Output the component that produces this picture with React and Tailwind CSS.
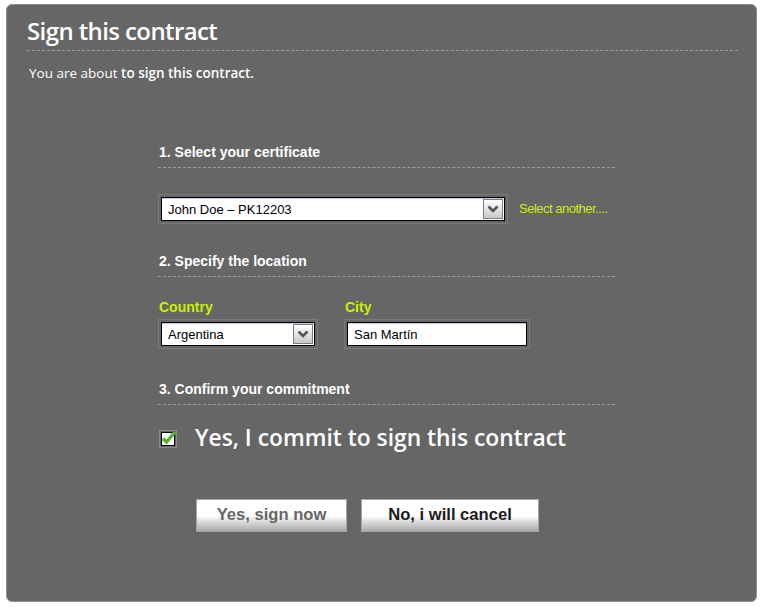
import React from 'react';

const arial = { fontFamily: '"Liberation Sans", Arial, sans-serif' };
const myriad = { fontFamily: '"Open Sans", "Noto Sans", sans-serif' };

const Arrow = () => (
  <div className="w-[20px] h-[20px] border border-[#7d7d7d] bg-gradient-to-b from-white to-[#c9c9c9] flex items-center justify-center">
    <svg width="12" height="8" viewBox="0 0 12 8">
      <path d="M1.5 1.5 L6 6 L10.5 1.5" fill="none" stroke="#555" strokeWidth="2.6" />
    </svg>
  </div>
);

const Field = ({ width, children, arrow }) => (
  <div className="border border-[#7b7b7b] p-[2px]" style={{ width }}>
    <div className="border border-black bg-white h-[24px] flex items-center justify-between pl-[6px] pr-[1px] shadow-[inset_0_1px_0_#c8c4e4]">
      <span className="text-[13px] text-black leading-none">{children}</span>
      {arrow && <Arrow />}
    </div>
  </div>
);

const Heading = ({ children, className = '' }) => (
  <h2 className={`text-[14px] font-bold text-white leading-[18px] pl-[1px] pb-[6px] border-b border-dashed border-[#9c9c9c] ${className}`}>
    {children}
  </h2>
);

const Check = () => (
  <svg width="20" height="20" viewBox="0 0 20 20">
    <rect x="0.5" y="2.5" width="17" height="17" fill="#666" stroke="#8a8a8a" />
    <rect x="2.5" y="4.5" width="13" height="13" fill="#fff" stroke="#000" />
    <path d="M4 10.5 L7.5 14 L16 4" fill="none" stroke="#55b531" strokeWidth="3.4" />
  </svg>
);

export default function App() {
  return (
    <div className="w-[763px] h-[609px] bg-white pt-[4px] pl-[6px]">
      <div className="w-[751px] h-[598px] bg-[#666666] rounded-[6px] border border-[#8f8f8f] pl-[20px] pr-[18px] pt-[11px]">
        <h1
          className="text-[24px] leading-[30px] font-semibold text-white tracking-[-0.6px] pb-[4px] border-b border-dashed border-[#9c9c9c]"
          style={myriad}
        >
          Sign this contract
        </h1>
        <p className="mt-[13px] text-[13.5px] leading-[18px] text-white pl-[2px]" style={myriad}>
          You are about <span className="font-semibold">to sign this contract.</span>
        </p>

        <div className="ml-[131px] w-[457px] mt-[61px]" style={arial}>
          <Heading>1. Select your certificate</Heading>
          <div className="mt-[26px] flex items-center">
            <Field width="350px" arrow>John Doe – PK12203</Field>
            <span className="ml-[11px] text-[13px] text-[#c8f000] tracking-[-0.5px]">Select another....</span>
          </div>

          <Heading className="mt-[28px]">2. Specify the location</Heading>
          <div className="mt-[21px] flex gap-[26px]">
            <div>
              <div className="text-[14px] font-bold text-[#c8f000] leading-[18px] mb-[3px] pl-[1px]">Country</div>
              <Field width="160px" arrow>Argentina</Field>
            </div>
            <div>
              <div className="text-[14px] font-bold text-[#c8f000] leading-[18px] mb-[3px] pl-[1px]">City</div>
              <Field width="186px">San Martín</Field>
            </div>
          </div>

          <Heading className="mt-[31px]">3. Confirm your commitment</Heading>
          <label className="mt-[18px] flex items-center h-[30px] pl-[1px]">
            <Check />
            <span className="ml-[16px] text-[22.8px] font-semibold text-white leading-[30px]" style={myriad}>
              Yes, I commit to sign this contract
            </span>
          </label>

          <div className="mt-[46px] ml-[38px] flex gap-[14px]">
            <button className="w-[151px] h-[33px] border border-[#a0a4ac] bg-gradient-to-b from-white from-50% to-[#a9a9a9] text-[16.6px] font-bold text-[#666]">
              Yes, sign now
            </button>
            <button className="w-[178px] h-[33px] border border-[#a0a4ac] bg-gradient-to-b from-white from-50% to-[#a9a9a9] text-[16.6px] font-bold text-[#1a1a1a]">
              No, i will cancel
            </button>
          </div>
        </div>
      </div>
    </div>
  );
}
